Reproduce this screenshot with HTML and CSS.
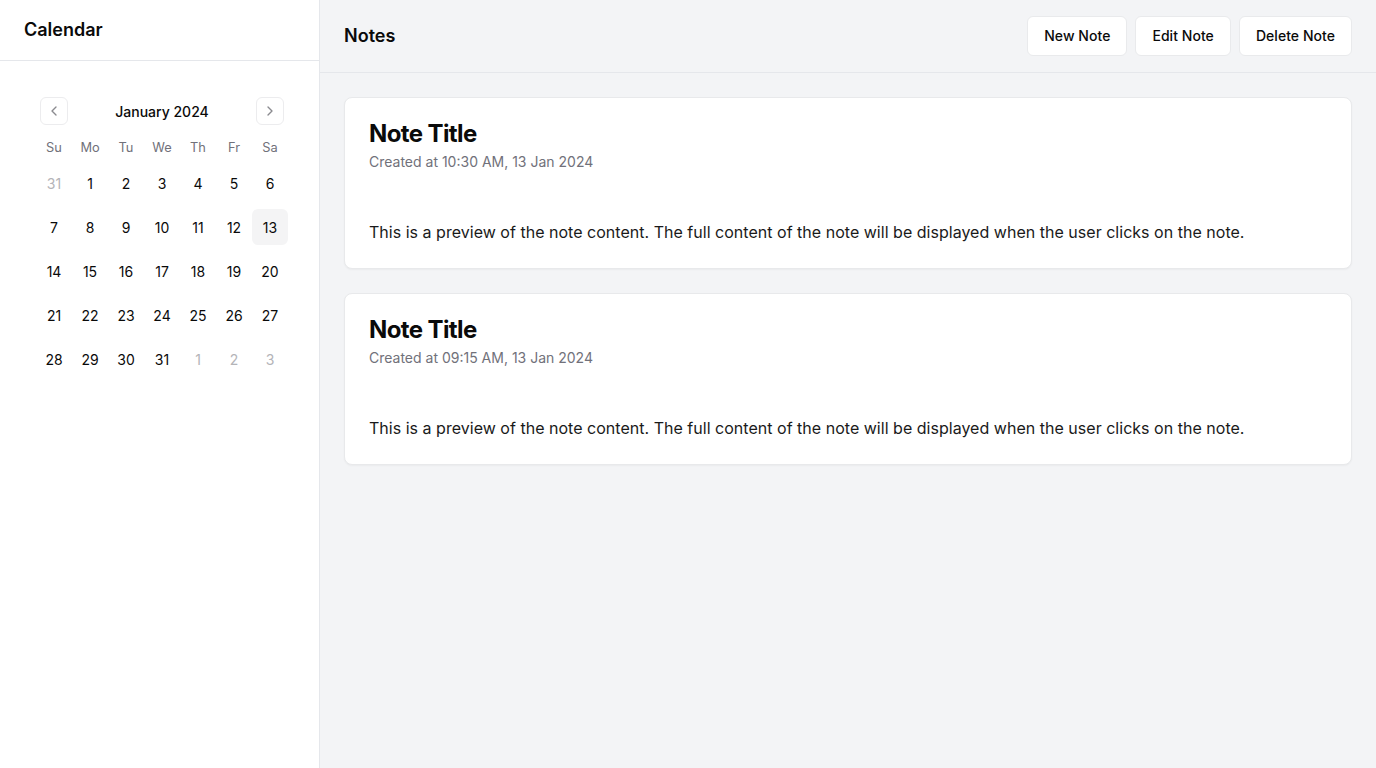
FILE: index.html
```html
<!DOCTYPE html>
<html lang="en">
<head>
<meta charset="utf-8">
<title>Notes</title>
<link rel="stylesheet" href="styles.css">
</head>
<body>
<div class="app">
  <aside class="sidebar">
    <div class="sidebar-header"><h2 class="sidebar-title">Calendar</h2></div>
    <div class="sidebar-body">
      <div class="calendar">
        <div class="caption">
          <button class="nav-btn" aria-label="Previous month">
            <svg width="16" height="16" viewBox="0 0 24 24" fill="none" stroke="currentColor" stroke-width="2" stroke-linecap="round" stroke-linejoin="round"><path d="m15 18-6-6 6-6"/></svg>
          </button>
          <span class="caption-label">January 2024</span>
          <button class="nav-btn" aria-label="Next month">
            <svg width="16" height="16" viewBox="0 0 24 24" fill="none" stroke="currentColor" stroke-width="2" stroke-linecap="round" stroke-linejoin="round"><path d="m9 18 6-6-6-6"/></svg>
          </button>
        </div>
        <div class="head-row">
          <span>Su</span><span>Mo</span><span>Tu</span><span>We</span><span>Th</span><span>Fr</span><span>Sa</span>
        </div>
        <div class="week"><span class="day outside">31</span><span class="day">1</span><span class="day">2</span><span class="day">3</span><span class="day">4</span><span class="day">5</span><span class="day">6</span></div>
        <div class="week"><span class="day">7</span><span class="day">8</span><span class="day">9</span><span class="day">10</span><span class="day">11</span><span class="day">12</span><span class="day today">13</span></div>
        <div class="week"><span class="day">14</span><span class="day">15</span><span class="day">16</span><span class="day">17</span><span class="day">18</span><span class="day">19</span><span class="day">20</span></div>
        <div class="week"><span class="day">21</span><span class="day">22</span><span class="day">23</span><span class="day">24</span><span class="day">25</span><span class="day">26</span><span class="day">27</span></div>
        <div class="week"><span class="day">28</span><span class="day">29</span><span class="day">30</span><span class="day">31</span><span class="day outside">1</span><span class="day outside">2</span><span class="day outside">3</span></div>
      </div>
    </div>
  </aside>
  <main class="main">
    <header class="main-header">
      <h1 class="main-title">Notes</h1>
      <div class="actions">
        <button class="btn">New Note</button>
        <button class="btn">Edit Note</button>
        <button class="btn">Delete Note</button>
      </div>
    </header>
    <section class="notes">
      <article class="card">
        <h3 class="card-title">Note Title</h3>
        <p class="card-meta">Created at 10:30 AM, 13 Jan 2024</p>
        <p class="card-body">This is a preview of the note content. The full content of the note will be displayed when the user clicks on the note.</p>
      </article>
      <article class="card">
        <h3 class="card-title">Note Title</h3>
        <p class="card-meta">Created at 09:15 AM, 13 Jan 2024</p>
        <p class="card-body">This is a preview of the note content. The full content of the note will be displayed when the user clicks on the note.</p>
      </article>
    </section>
  </main>
</div>
</body>
</html>
```
FILE: styles.css
```css
* { box-sizing: border-box; }
html, body { margin: 0; height: 100%; }
body {
  font-family: Inter, "Noto Sans", "Liberation Sans", sans-serif;
  color: #0a0a0a;
  background: #fff;
}
.app { display: flex; height: 768px; }

.sidebar {
  width: 320px;
  flex-shrink: 0;
  background: #fff;
  border-right: 1px solid #e5e7eb;
  display: flex;
  flex-direction: column;
}
.sidebar-header {
  height: 61px;
  border-bottom: 1px solid #e5e7eb;
  padding: 0 24px;
  display: flex;
  align-items: center;
}
.sidebar-title { margin: 0; font-size: 18px; font-weight: 600; line-height: 28px; }
.sidebar-body { padding: 24px; }

.calendar { padding: 12px; width: 276px; }
.caption {
  height: 28px;
  display: flex;
  align-items: center;
  justify-content: space-between;
  padding: 0 4px;
}
.caption-label { font-size: 14px; font-weight: 500; line-height: 20px; padding-top: 1px; }
.nav-btn {
  width: 28px; height: 28px;
  display: flex; align-items: center; justify-content: center;
  border: 1px solid #ececee;
  border-radius: 6px;
  background: #fff;
  color: #8a8a8f;
  padding: 0;
}
.head-row {
  display: grid;
  grid-template-columns: repeat(7, 36px);
  margin-top: 13px;
  height: 20px;
}
.head-row span {
  text-align: center;
  font-size: 12.8px;
  line-height: 20px;
  color: #71717a;
}
.week {
  display: grid;
  grid-template-columns: repeat(7, 36px);
  margin-top: 8px;
}
.head-row + .week { margin-top: 7px; }
.day {
  width: 36px; height: 36px;
  display: flex; align-items: center; justify-content: center;
  font-size: 14px;
  border-radius: 6px;
  color: #0a0a0a;
}
.day.outside { color: #b4b4b8; }
.day.today { background: #f4f4f5; }

.main {
  flex: 1;
  background: #f3f4f6;
  display: flex;
  flex-direction: column;
}
.main-header {
  height: 73px;
  border-bottom: 1px solid #e5e7eb;
  padding: 0 24px;
  display: flex;
  align-items: center;
  justify-content: space-between;
}
.main-title { margin: 0; font-size: 18px; font-weight: 600; line-height: 28px; }
.actions { display: flex; gap: 8px; }
.btn {
  font-family: inherit;
  font-size: 14px;
  font-weight: 500;
  line-height: 20px;
  letter-spacing: 0.05px;
  padding: 9px 16px;
  background: #fff;
  color: #0a0a0a;
  border: 1px solid #e9eaec;
  border-radius: 6px;
}

.notes {
  padding: 24px;
  display: flex;
  flex-direction: column;
  gap: 24px;
}
.card {
  background: #fff;
  border: 1px solid #e8e9eb;
  border-radius: 8px;
  box-shadow: 0 1px 2px rgba(0,0,0,0.04);
  padding: 20px 24px 24px;
}
.card-title { margin: 0; font-size: 24px; font-weight: 700; line-height: 32px; letter-spacing: -0.6px; }
.card-meta { margin: 2px 0 0; font-size: 14px; line-height: 20px; color: #71717a; }
.card-body { margin: 48px 0 0; font-size: 16px; line-height: 24px; color: #1a1a1a; letter-spacing: 0.02px; }
```
